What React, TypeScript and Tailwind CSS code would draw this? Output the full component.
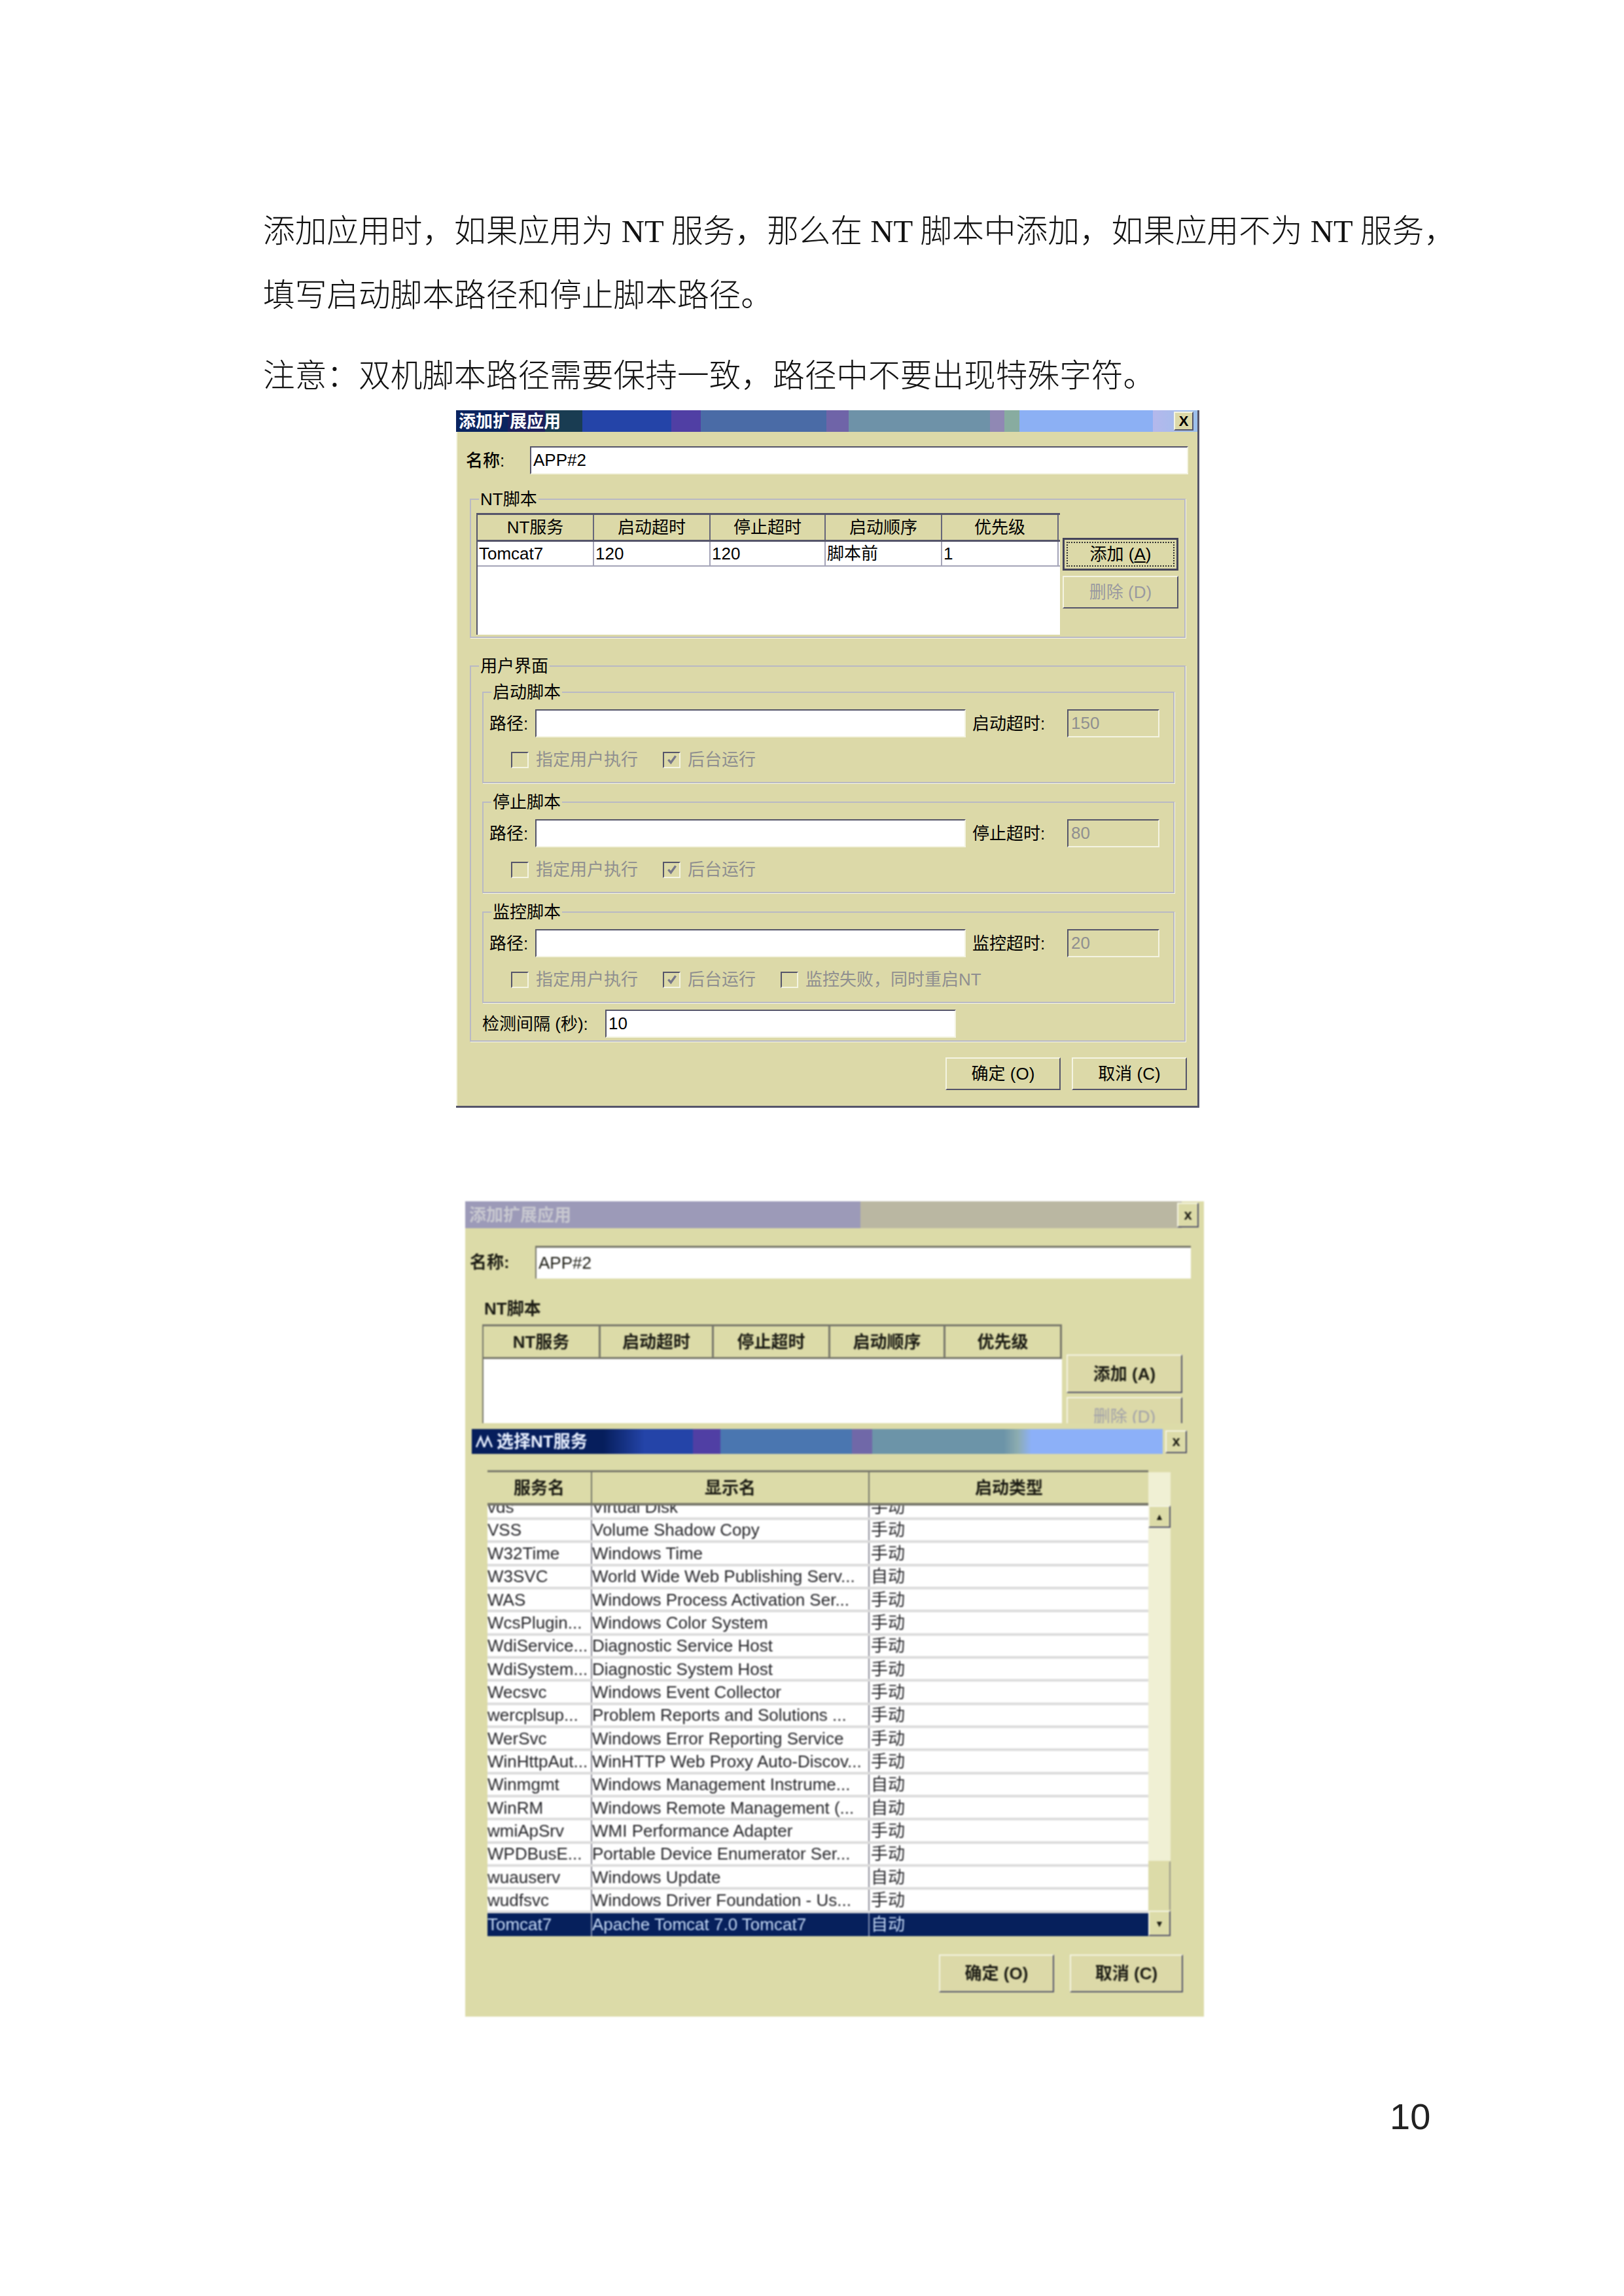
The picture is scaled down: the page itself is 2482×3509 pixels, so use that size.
import React from 'react';

const cjk = "font-['Liberation_Sans','Noto_Sans_CJK_SC',sans-serif]";

const raised = 'border-2 border-t-[#f4f4e2] border-l-[#f4f4e2] border-r-[#55556a] border-b-[#55556a]';
const sunken = 'border-2 border-t-[#55556a] border-l-[#55556a] border-r-[#f4f4e2] border-b-[#f4f4e2]';

const Btn = ({ label, className = '' }: { label: string; className?: string }) => (
  <div className={`flex items-center justify-center bg-[#dcd9a8] text-[26px] leading-none ${raised} ${className}`}>{label}</div>
);

const Check = ({ label, checked }: { label: string; checked?: boolean }) => (
  <div className="flex items-center gap-[11px] text-[26px] leading-none text-[#8f8f90]">
    <div className={`flex h-[25px] w-[27px] items-center justify-center bg-[#dcd9a8] ${sunken}`}>
      {checked && (
        <svg viewBox="0 0 16 16" className="h-[18px] w-[18px]">
          <path d="M3 8l3.5 4L13 3" fill="none" stroke="#77778a" strokeWidth="3" />
        </svg>
      )}
    </div>
    <span>{label}</span>
  </div>
);

const Group = ({ title, className = '', children }: { title: string; className?: string; children: React.ReactNode }) => (
  <div className={`relative border-2 border-[#b9b9c4] shadow-[1px_1px_0_#f6f6e6] ${className}`}>
    <span className="absolute -top-[16px] left-[12px] bg-[#dcd9a8] px-[2px] text-[26px] leading-[30px]">{title}</span>
    {children}
  </div>
);

const ScriptGroup = ({ title, label, value, extra }: { title: string; label: string; value: string; extra?: boolean }) => (
  <Group title={title} className="h-[140px] pl-[9px] pr-[12px] pt-[25px]">
    <div className="flex items-center">
      <span className="w-[70px] text-[26px] leading-none">路径:</span>
      <div className={`h-[43px] w-[658px] bg-white ${sunken}`} />
      <span className="ml-[10px] w-[145px] text-[26px] leading-none">{label}:</span>
      <div className={`flex h-[43px] w-[141px] items-center pl-[4px] text-[26px] text-[#8f8f90] ${sunken}`}>{value}</div>
    </div>
    <div className="ml-[33px] mt-[21px] flex gap-[38px]">
      <Check label="指定用户执行" />
      <Check label="后台运行" checked />
      {extra && <Check label="监控失败，同时重启NT" />}
    </div>
  </Group>
);

const firstCols = ['w-[178px]', 'w-[178px]', 'w-[176px]', 'w-[178px]', 'w-[178px]'];
const firstHead = ['NT服务', '启动超时', '停止超时', '启动顺序', '优先级'];
const firstRow = ['Tomcat7', '120', '120', '脚本前', '1'];

const FirstDialog = () => (
  <div className="ml-[697px] h-[1066px] w-[1136px] border-b-[3px] border-r-[3px] border-[#55556a] bg-[#dcd9a8] shadow-[inset_2px_0_0_#f4f4e2] text-black">
    <div className="flex h-[33px] bg-[linear-gradient(90deg,#0a2460_0,#0a2460_7%,#1c1f5c_7%,#1c1f5c_12%,#193c52_12%,#193c52_17%,#2444a8_17%,#2444a8_29%,#503fa4_29%,#503fa4_33%,#4a6ba6_33%,#4a6ba6_50%,#6f64a8_50%,#6f64a8_53%,#6e92a8_53%,#6e92a8_72%,#9088b4_72%,#9088b4_74%,#88aca0_74%,#88aca0_76%,#8cb0f4_76%,#8cb0f4_94%,#b4b8ec_94%,#9cc0ec_100%)] items-center justify-between pl-[4px] pr-[6px]">
      <span className="text-[26px] font-bold leading-none text-white">添加扩展应用</span>
      <div className={`flex h-[29px] w-[30px] items-center justify-center bg-[#dcd9a8] text-[22px] font-bold leading-none ${raised}`}>X</div>
    </div>
    <div className="ml-[15px] mt-[22px] flex items-center">
      <span className="w-[98px] text-[26px] font-medium leading-none">名称:</span>
      <div className={`flex h-[43px] w-[1006px] items-center bg-white pl-[3px] text-[26px] ${sunken}`}>APP#2</div>
    </div>
    <Group title="NT脚本" className="ml-[21px] mt-[37px] h-[213px] w-[1094px]">
      <div className="ml-[8px] mt-[20px] flex">
        <div className="h-[186px] w-[892px] border-l-2 border-[#55556a] bg-white">
          <div className="flex h-[44px] border-y-[3px] border-[#55556a] bg-[#dcd9a8]">
            {firstHead.map((h, i) => (
              <div key={h} className={`flex items-center justify-center border-r-2 border-[#66667a] text-[26px] leading-none ${firstCols[i]}`}>{h}</div>
            ))}
          </div>
          <div className="flex h-[38px] border-b-2 border-[#a4a4b8]">
            {firstRow.map((c, i) => (
              <div key={i} className={`flex items-center border-r-2 border-[#a4a4b8] pl-[2px] text-[26px] leading-none ${firstCols[i]}`}>{c}</div>
            ))}
          </div>
        </div>
        <div className="ml-[4px] mt-[38px] flex flex-col gap-[8px]">
          <div className="h-[50px] w-[177px] border-[3px] border-[#44445a] bg-[#dcd9a8] p-[3px]">
            <div className="flex h-full items-center justify-center border-2 border-dotted border-[#333] text-[26px] leading-none">
              添加 (<span className="underline">A</span>)
            </div>
          </div>
          <Btn label="删除 (D)" className="h-[50px] w-[177px] text-[#9a9aa0]" />
        </div>
      </div>
    </Group>
    <Group title="用户界面" className="ml-[21px] mt-[42px] h-[575px] w-[1094px]">
      <div className="ml-[17px] mt-[38px] flex w-[1058px] flex-col gap-[28px]">
        <ScriptGroup title="启动脚本" label="启动超时" value="150" />
        <ScriptGroup title="停止脚本" label="停止超时" value="80" />
        <ScriptGroup title="监控脚本" label="监控超时" value="20" extra />
      </div>
      <div className="ml-[17px] mt-[10px] flex items-center">
        <span className="w-[188px] text-[26px] leading-none">检测间隔 (秒):</span>
        <div className={`flex h-[43px] w-[536px] items-center bg-white pl-[3px] text-[26px] ${sunken}`}>10</div>
      </div>
    </Group>
    <div className="mr-[16px] mt-[24px] flex justify-end gap-[17px]">
      <Btn label="确定 (O)" className="h-[50px] w-[176px]" />
      <Btn label="取消 (C)" className="h-[50px] w-[176px]" />
    </div>
  </div>
);

const services: [string, string, string][] = [
  ['VSS', 'Volume Shadow Copy', '手动'],
  ['W32Time', 'Windows Time', '手动'],
  ['W3SVC', 'World Wide Web Publishing Serv...', '自动'],
  ['WAS', 'Windows Process Activation Ser...', '手动'],
  ['WcsPlugin...', 'Windows Color System', '手动'],
  ['WdiService...', 'Diagnostic Service Host', '手动'],
  ['WdiSystem...', 'Diagnostic System Host', '手动'],
  ['Wecsvc', 'Windows Event Collector', '手动'],
  ['wercplsup...', 'Problem Reports and Solutions ...', '手动'],
  ['WerSvc', 'Windows Error Reporting Service', '手动'],
  ['WinHttpAut...', 'WinHTTP Web Proxy Auto-Discov...', '手动'],
  ['Winmgmt', 'Windows Management Instrume...', '自动'],
  ['WinRM', 'Windows Remote Management (...', '自动'],
  ['wmiApSrv', 'WMI Performance Adapter', '手动'],
  ['WPDBusE...', 'Portable Device Enumerator Ser...', '手动'],
  ['wuauserv', 'Windows Update', '自动'],
  ['wudfsvc', 'Windows Driver Foundation - Us...', '手动'],
];

const Row = ({ row, selected }: { row: [string, string, string]; selected?: boolean }) => (
  <div className={`flex h-[35.35px] shrink-0 items-center overflow-hidden whitespace-nowrap text-[26px] leading-none ${selected ? 'bg-[#06205c] text-[#c4d8f4]' : 'border-b-[4px] border-[#dcdcdc] bg-white text-[#26262a]'}`}>
    <div className={`flex h-full w-[160px] items-center border-r-2 ${selected ? 'border-[#8090b0]' : 'border-[#8c8c98]'}`}>{row[0]}</div>
    <div className={`flex h-full w-[424px] items-center border-r-2 ${selected ? 'border-[#8090b0]' : 'border-[#8c8c98]'}`}>{row[1]}</div>
    <div className="pl-[2px]">{row[2]}</div>
  </div>
);

const secondCols = ['w-[179px]', 'w-[173px]', 'w-[178px]', 'w-[176px]', 'w-[178px]'];

const SecondDialog = () => (
  <div className="relative ml-[711px] mt-[143px] h-[1246px] w-[1129px] bg-[#dcdba8] text-[#1c1c14] blur-[0.8px]">
    <div className="flex h-[41px] items-center justify-between bg-[linear-gradient(90deg,#9c9ab8_0,#9c9ab8_53.5%,#bab7a2_53.5%,#bab7a2_97%,#dcdba8_97%)] pl-[6px] pr-[8px]">
      <span className="text-[26px] font-bold leading-none text-[#c8c8d0]">添加扩展应用</span>
      <div className={`flex h-[38px] w-[33px] items-center justify-center bg-[#dcdba8] text-[22px] font-bold leading-none ${raised}`}>x</div>
    </div>
    <div className="ml-[7px] mt-[27px] flex items-center">
      <span className="w-[100px] text-[26px] font-bold leading-none">名称:</span>
      <div className="flex h-[50px] w-[1002px] items-center border-t-[3px] border-l-2 border-[#77776a] bg-white pl-[3px] text-[26px]">APP#2</div>
    </div>
    <div className="ml-[29px] mt-[31px] text-[26px] font-bold leading-[30px]">NT脚本</div>
    <div className="ml-[26px] mt-[9px] flex">
      <div className="h-[151px] w-[886px] border-l-2 border-[#77776a] bg-white">
        <div className="flex h-[53px] border-y-[3px] border-[#77776a] bg-[#dcdba8]">
          {firstHead.map((h, i) => (
            <div key={h} className={`flex items-center justify-center border-r-[3px] border-[#77776a] text-[26px] font-bold leading-none ${secondCols[i]}`}>{h}</div>
          ))}
        </div>
      </div>
      <div className="ml-[7px] mt-[46px] flex flex-col gap-[6px]">
        <Btn label="添加 (A)" className="h-[59px] w-[177px] font-bold" />
        <Btn label="删除 (D)" className="h-[59px] w-[177px] text-[#a0a0a8]" />
      </div>
    </div>
    {/* select dialog sits on top of the first one */}
    <div className="absolute bottom-[2px] left-[10px] right-[8px] top-[339px] bg-[#dcdba8] pt-[9px]">
      <div className="flex h-[38px] items-center">
        <div className="flex h-full w-[1056px] items-center gap-[6px] bg-[linear-gradient(90deg,#061e5c_0,#061e5c_19%,#2444a8_25%,#2444a8_32%,#503fa4_32%,#503fa4_36%,#4a76b0_36%,#4a76b0_55%,#7068a8_55%,#7068a8_58%,#6c94a8_58%,#6c94a8_77%,#8cacb0_79%,#8cb0f8_81%,#8cb0f8_100%)] pl-[6px]">
          <svg viewBox="0 0 24 20" className="h-[22px] w-[26px]">
            <path d="M1 18L7 4l5 14M12 18L17 4l6 14" fill="none" stroke="#e8f0ff" strokeWidth="2.5" />
          </svg>
          <span className="text-[26px] font-bold leading-none text-[#e8f0ff]">选择NT服务</span>
        </div>
        <div className={`ml-[4px] flex h-[35px] w-[33px] items-center justify-center bg-[#dcdba8] text-[22px] font-bold leading-none ${raised}`}>x</div>
      </div>
      <div className="ml-[24px] mt-[25px] flex w-[1046px]">
        <div className="w-[1010px]">
          <div className="flex h-[54px] border-t-[3px] border-b-[4px] border-[#77776a] bg-[#dcdba8] text-[26px] font-bold leading-none">
            <div className="flex w-[160px] items-center justify-center border-r-2 border-[#77776a]">服务名</div>
            <div className="flex w-[424px] items-center justify-center border-r-2 border-[#77776a]">显示名</div>
            <div className="flex flex-1 items-center justify-center">启动类型</div>
          </div>
          <div className="flex h-[658px] flex-col justify-end overflow-hidden">
            <Row row={['vds', 'Virtual Disk', '手动']} />
            {services.map((s) => (
              <Row key={s[0]} row={s} />
            ))}
            <Row row={['Tomcat7', 'Apache Tomcat 7.0 Tomcat7', '自动']} selected />
          </div>
        </div>
        <div className="mt-[3px] flex w-[34px] flex-col bg-[#f0f0d4]">
          <div className="h-[51px]" />
          <div className={`flex h-[34px] items-center justify-center bg-[#dcdba8] text-[14px] leading-none ${raised}`}>▲</div>
          <div className="flex-1" />
          <div className="h-[76px] border-2 border-[#dcdba8] border-r-[#99998a] bg-[#dcdba8]" />
          <div className={`flex h-[39px] items-center justify-center bg-[#dcdba8] text-[14px] leading-none ${raised}`}>▼</div>
        </div>
      </div>
      <div className="mr-[24px] mt-[28px] flex justify-end gap-[24px]">
        <Btn label="确定 (O)" className="h-[58px] w-[176px] font-bold" />
        <Btn label="取消 (C)" className="h-[58px] w-[173px] font-bold" />
      </div>
    </div>
  </div>
);

export default function App() {
  return (
    <div className={`h-[3509px] w-[2482px] overflow-hidden bg-white text-black ${cjk}`}>
      <div className="pl-[402px] pt-[326px] font-['Liberation_Serif','Noto_Sans_CJK_SC',serif] text-[48.7px] font-light leading-[56px] text-[#111]">
        <p className="whitespace-nowrap">添加应用时，如果应用为 NT 服务，那么在 NT 脚本中添加，如果应用不为 NT 服务，</p>
        <p className="mt-[42px]">填写启动脚本路径和停止脚本路径。</p>
        <p className="mt-[67px]">注意：双机脚本路径需要保持一致，路径中不要出现特殊字符。</p>
      </div>
      <div className="mt-[24px]">
        <FirstDialog />
      </div>
      <SecondDialog />
      <div className="mt-[121px] pl-[2124px] font-['Liberation_Sans',sans-serif] text-[56px] leading-[64px] text-[#222]">10</div>
    </div>
  );
}
